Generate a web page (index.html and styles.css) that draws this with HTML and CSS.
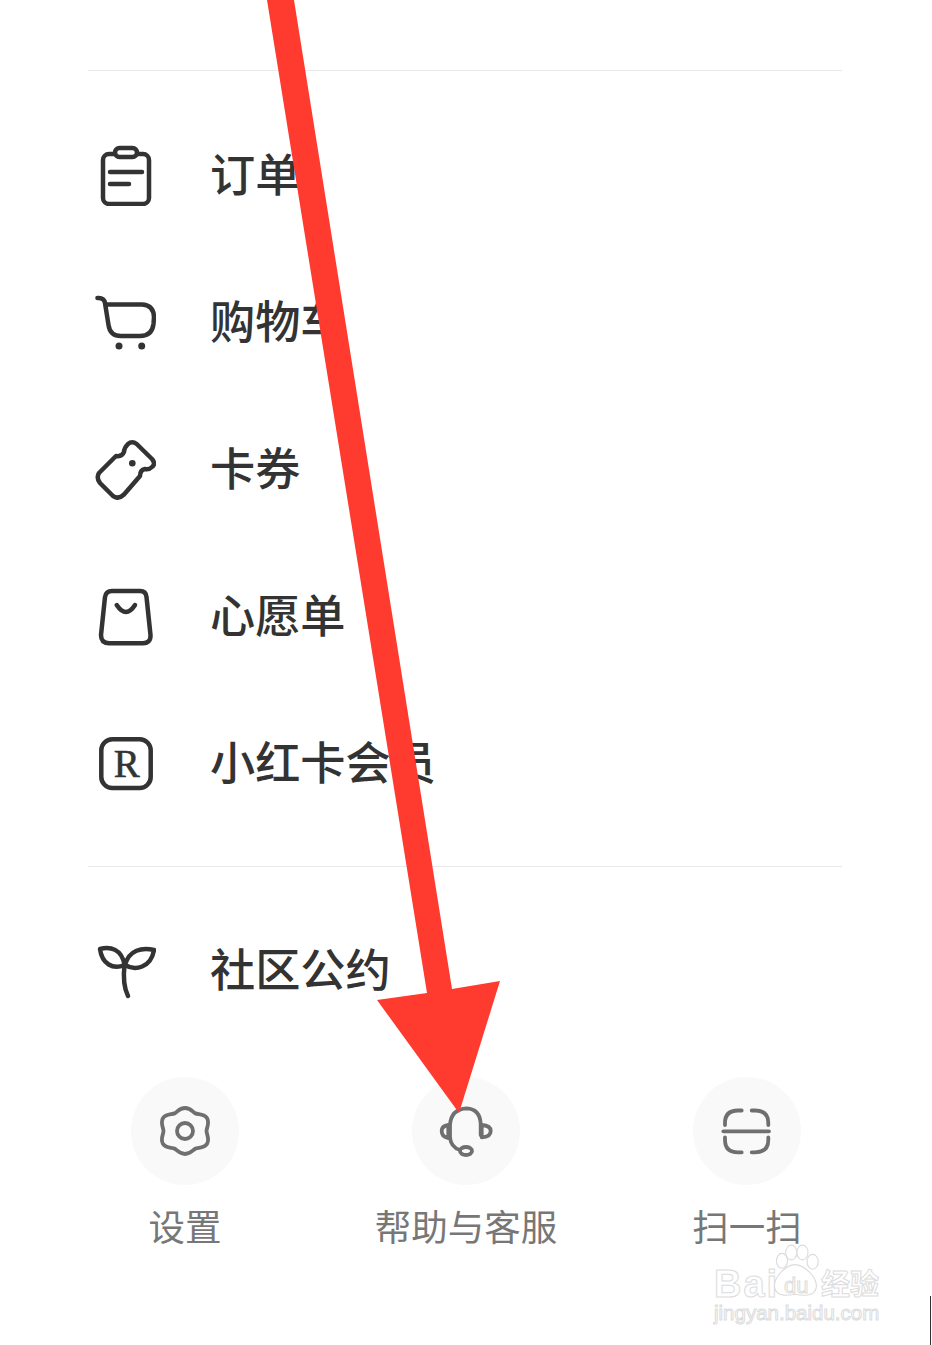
FILE: index.html
```html
<!DOCTYPE html>
<html lang="zh-CN">
<head>
<meta charset="utf-8">
<title>我的</title>
<link rel="stylesheet" href="styles.css">
</head>
<body>
<main class="page">
  <hr class="divider divider-top">
  <ul class="menu">
    <li class="menu-row">
      <svg class="menu-icon" viewBox="0 0 61 61"><rect x="8" y="9" width="46" height="50" rx="6"/><rect class="fill-white" x="20" y="3" width="22" height="9" rx="4.5"/><path d="M15 27H47M15 39H34"/></svg>
      <span>订单</span>
    </li>
    <li class="menu-row">
      <svg class="menu-icon" viewBox="0 0 61 61"><path d="M2.5 6Q9 5.500 10 11L13.500 33Q15 44 26 44H45Q57 44 58.500 32L59 25Q58.500 13 47 12.500H11"/><circle class="dot" cx="24" cy="54" r="3.500"/><circle class="dot" cx="46.700" cy="54" r="3.500"/></svg>
      <span>购物车</span>
    </li>
    <li class="menu-row">
      <svg class="menu-icon" viewBox="0 0 61 61"><path d="M4 34L21 17Q27 18 29 13Q29 9 33 5Q37 1.500 41.700 5L57 20Q61 25 57 28Q54 31 50 30Q45 31 45 37L29 55.500Q23 61 18 57L5 44Q1 39 4 34Z"/><circle class="dot" cx="37.300" cy="24.300" r="3.300"/></svg>
      <span>卡券</span>
    </li>
    <li class="menu-row">
      <svg class="menu-icon" viewBox="0 0 61 61"><path d="M17 5H45Q51 5 51.500 11L55.500 49Q56 57 48 57.300H14Q6 57 6 49L10 11Q11 5 17 5Z"/><path d="M21.700 19Q31 33 40 19"/></svg>
      <span>心愿单</span>
    </li>
    <li class="menu-row">
      <svg class="menu-icon" viewBox="0 0 61 61"><rect x="6.300" y="6.300" width="49.400" height="48.700" rx="11"/><text class="r-mark" x="31.700" y="43.700">R</text></svg>
      <span>小红卡会员</span>
    </li>
  </ul>
  <hr class="divider divider-mid">
  <div class="menu-row community">
    <svg class="menu-icon" viewBox="0 0 61 61"><path d="M5 9C15 6 27 9 29.500 25C18 30 7 24 5 9Z"/><path d="M59 10C47 7 34 10 30 25C40 31 56 28 59 10Z"/><path d="M29.500 25C28 38 29 48 33 56"/></svg>
    <span>社区公约</span>
  </div>
  <nav class="shortcuts">
    <a class="shortcut">
      <span class="shortcut-disc"><svg class="shortcut-icon" viewBox="0 0 60 60"><path d="M30 7C35.500 7 37.650 10.750 40.250 12.250C42.850 13.750 49.350 12.500 52.100 17.250C54.850 22 51.500 27 51.500 30C51.500 33 54.850 38 52.100 42.750C49.350 47.500 42.850 46.250 40.250 47.750C37.650 49.250 35.500 53 30 53C24.500 53 22.350 49.250 19.750 47.750C17.150 46.250 10.650 47.500 7.900 42.750C5.150 38 8.500 33 8.500 30C8.500 27 5.150 22 7.900 17.250C10.650 12.500 17.150 13.750 19.750 12.250C22.350 10.750 24.500 7 30 7Z"/><circle cx="30" cy="30" r="8"/></svg></span>
      <span class="shortcut-label">设置</span>
    </a>
    <a class="shortcut">
      <span class="shortcut-disc"><svg class="shortcut-icon" viewBox="0 0 60 60"><path d="M44.700 34V23Q44 8 30.700 7.300Q15 8 14 24V36Q14.500 46 24 49"/><ellipse cx="30" cy="50" rx="6" ry="4"/><path d="M12.300 24Q5.700 25 5.700 30Q5.700 36 12.300 37Z"/><path d="M45.700 24V36.300Q54.700 36 54.700 30Q54.700 24.500 45.700 24Z"/></svg></span>
      <span class="shortcut-label">帮助与客服</span>
    </a>
    <a class="shortcut">
      <span class="shortcut-disc"><svg class="shortcut-icon" viewBox="0 0 60 60"><path d="M24.700 9.500H21Q8 9.500 8 22V24M34.700 9.500H38Q51.300 9.500 51.300 22V24M6.300 30.300H52M8 36.300V39Q8 51.300 21 51.300H24.700M51.300 36.300V39Q51.300 51.300 38 51.300H34.700"/></svg></span>
      <span class="shortcut-label">扫一扫</span>
    </a>
  </nav>
</main>

<svg class="arrow" viewBox="0 0 932 1345" aria-hidden="true"><polygon points="267,0 294,0 452,989 500,981 459,1113 377,1000 427,993"/></svg>

<div class="watermark">
  <span class="wm-bai">Bai</span>
  <svg class="wm-paw" viewBox="0 0 56 60"><ellipse cx="14" cy="18" rx="6" ry="8"/><ellipse cx="24" cy="9" rx="6" ry="8"/><ellipse cx="36" cy="9" rx="6" ry="8"/><ellipse cx="47" cy="19" rx="6" ry="8"/><path d="M28 22C38 22 52 36 51 46C50 56 38 56 28 54C18 56 7 56 6 46C5 36 18 22 28 22Z"/></svg>
  <span class="wm-du">du</span>
  <span class="wm-cn">经验</span>
  <span class="wm-url">jingyan.baidu.com</span>
</div>
<div class="edge-mark"></div>
</body>
</html>
```

FILE: styles.css
```css
* { box-sizing: border-box; }
html, body { margin: 0; padding: 0; }
body {
  position: relative;
  width: 932px;
  height: 1345px;
  overflow: hidden;
  background: #fff;
  font-family: "Noto Sans CJK SC", "Noto Sans", sans-serif;
  color: #333;
}
.page { padding-top: 70px; }
.divider {
  height: 1px;
  margin: 0 90px 0 88px;
  border: 0;
  background: #e9e9e9;
}
.menu {
  list-style: none;
  margin: 31px 0 29px;
  padding: 0;
}
.menu-row {
  display: flex;
  align-items: center;
  gap: 54px;
  height: 147px;
  padding-left: 95px;
  font-size: 45.200px;
  line-height: 60px;
  font-weight: 500;
}
.menu-row span { margin-bottom: 5px; }
.community { margin-top: 30px; }
.menu-icon {
  flex: none;
  width: 61px;
  height: 61px;
  fill: none;
  stroke: #333;
  stroke-width: 4.5;
  stroke-linecap: round;
  stroke-linejoin: round;
}
.fill-white { fill: #fff; }
.dot { fill: #333; stroke: none; }
.r-mark {
  font-family: "Liberation Serif", serif;
  font-size: 39px;
  text-anchor: middle;
  fill: #333;
  stroke: #333;
  stroke-width: 0.6;
}
.shortcuts {
  display: grid;
  grid-template-columns: repeat(3, 280px);
  gap: 1px;
  margin-top: 33px;
  padding-left: 45px;
}
.shortcut {
  display: flex;
  flex-direction: column;
  align-items: center;
  gap: 16px;
}
.shortcut-disc {
  display: flex;
  align-items: center;
  justify-content: center;
  width: 108px;
  height: 108px;
  border-radius: 50%;
  background: #f9f9f9;
}
.shortcut-icon {
  width: 60px;
  height: 60px;
  fill: none;
  stroke: #6f6f6f;
  stroke-width: 3.8;
  stroke-linecap: round;
  stroke-linejoin: round;
}
.shortcut-label {
  font-size: 36.500px;
  line-height: 50px;
  font-weight: 400;
  color: #777;
  white-space: nowrap;
}
.arrow {
  position: absolute;
  inset: 0;
  width: 932px;
  height: 1345px;
  fill: #ff3a2f;
  pointer-events: none;
}
.watermark {
  position: absolute;
  left: 714px;
  top: 1244px;
  width: 170px;
  height: 86px;
  color: #fff;
  font-family: "Liberation Sans", sans-serif;
  -webkit-text-stroke: 1px #dcdcdc;
}
.wm-bai {
  position: absolute;
  left: 0;
  top: 24px;
  font-size: 38px;
  line-height: 32px;
  font-weight: 700;
  letter-spacing: 2px;
}
.wm-paw {
  position: absolute;
  left: 55px;
  top: 0;
  width: 52px;
  height: 56px;
  fill: #fff;
  stroke: #dcdcdc;
  stroke-width: 1.2;
}
.wm-du {
  position: absolute;
  left: 70px;
  top: 31px;
  font-size: 22px;
  line-height: 22px;
}
.wm-cn {
  position: absolute;
  left: 107px;
  top: 22px;
  font-family: "Noto Sans CJK SC", sans-serif;
  font-size: 29px;
  line-height: 32px;
  font-weight: 700;
  white-space: nowrap;
}
.wm-url {
  position: absolute;
  left: 0;
  top: 57px;
  font-size: 20.500px;
  line-height: 24px;
  white-space: nowrap;
}
.edge-mark {
  position: absolute;
  left: 930px;
  top: 1296px;
  width: 1px;
  height: 49px;
  background: #333;
}
```
